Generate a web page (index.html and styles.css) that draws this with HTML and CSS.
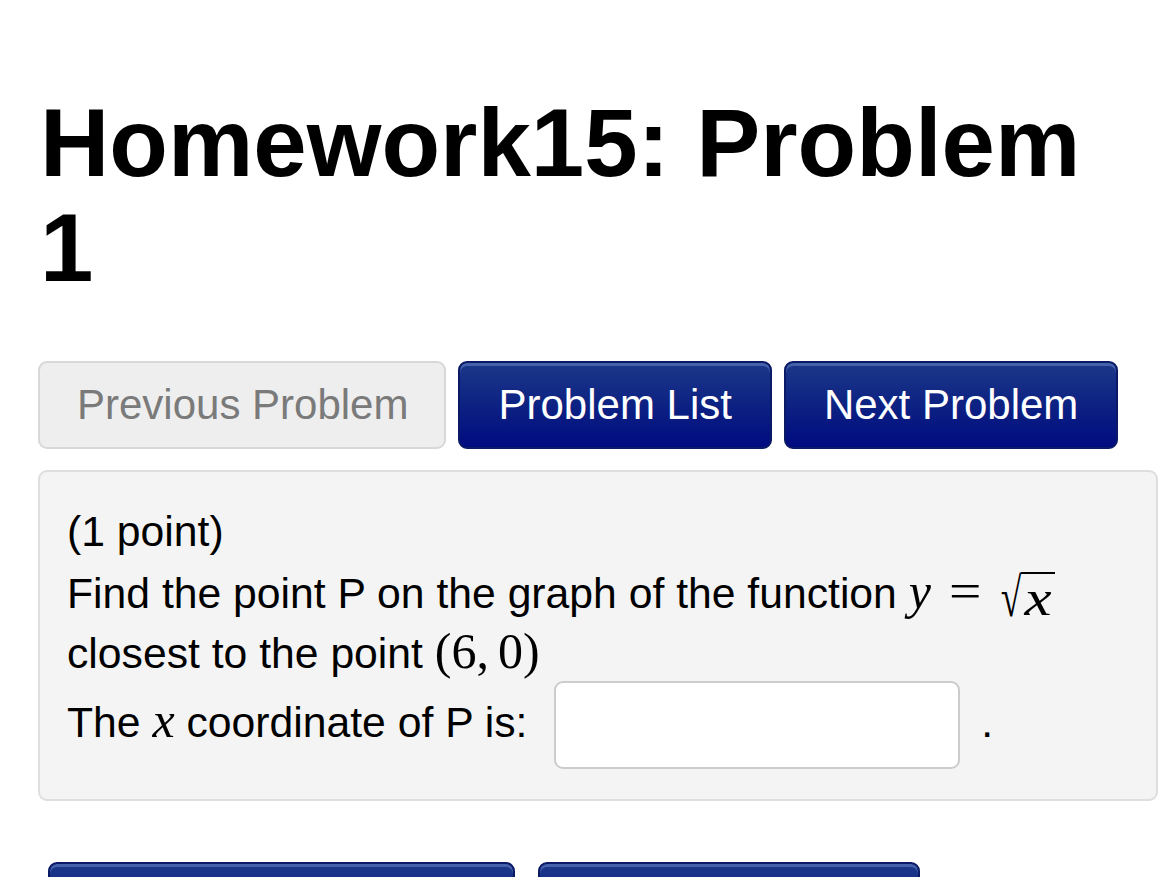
FILE: index.html
```html
<!DOCTYPE html>
<html lang="en">
<head>
<meta charset="utf-8">
<title>Homework15: Problem 1</title>
<link rel="stylesheet" href="styles.css">
</head>
<body>
<div class="page">
  <h1 class="title">Homework15: Problem 1</h1>
  <div class="nav">
    <span class="btn btn-disabled">Previous Problem</span>
    <span class="btn btn-blue">Problem List</span>
    <span class="btn btn-blue">Next Problem</span>
  </div>
  <div class="problem">
    <div class="line">(1 point)</div>
    <div class="line">Find the point P on the graph of the function <span class="math"><i class="mi">y</i><span class="mo">=</span><span class="sqrt"><span class="rad">√</span><span class="radicand"><i class="mi mi-wide">x</i></span></span></span></div>
    <div class="line">closest to the point <span class="math mnum">(6,<span class="thin"></span>0)</span></div>
    <div class="line-answer">The <span class="math"><i class="mi">x</i></span> coordinate of P is: <span class="answer"></span> .</div>
  </div>
  <div class="submit">
    <span class="btn btn-blue">Preview My Answers</span>
    <span class="btn btn-blue">Submit Answers</span>
  </div>
</div>
</body>
</html>
```
FILE: styles.css
```css
html, body {
  margin: 0;
  padding: 0;
  background: #ffffff;
}
body {
  font-family: "Liberation Sans", Arial, sans-serif;
  color: #000;
}
.page {
  padding: 90px 9px 0 38px;
}
.title {
  margin: 0;
  font-size: 96px;
  line-height: 105px;
  font-weight: bold;
  padding-right: 60px;
  padding-left: 2px;
}
.nav {
  display: flex;
  gap: 12px;
  margin-top: 61px;
}
.btn {
  display: inline-block;
  font-size: 42px;
  line-height: 60px;
  padding: 12px 38px;
  border: 2px solid;
  border-radius: 9px;
  white-space: nowrap;
}
.btn-disabled {
  background: #eeeeee;
  border-color: #d8d8d8;
  color: #7a7a7a;
  padding: 12px 36px 12px 37px;
}
.btn-blue {
  background: linear-gradient(#1c3889 0%, #0e2483 45%, #000b80 100%);
  border-color: #0b1a66;
  color: #ffffff;
  box-shadow: inset 0 3px 0 rgba(120, 150, 210, 0.45);
}
.problem {
  margin-top: 21px;
  background: #f4f4f4;
  border: 2px solid #dedede;
  border-radius: 9px;
  padding: 29px 26px 30px 27px;
  font-size: 42.7px;
  line-height: 60px;
}
.line {
  white-space: nowrap;
  height: 60px;
}
.line-answer {
  white-space: nowrap;
}
.math {
  font-family: "Liberation Serif", "Times New Roman", serif;
  font-size: 50px;
}
.mi {
  font-style: italic;
}
.mi-wide {
  display: inline-block;
  transform: scaleX(1.22);
  margin: 0 4px 0 3px;
}
.mo {
  display: inline-block;
  transform: scaleX(1.15);
  margin: 0 15px 0 20px;
}
.sqrt {
  display: inline-flex;
  align-items: flex-start;
}
.rad {
  display: inline-block;
  transform: translateY(6px) scale(0.75, 1.1);
  transform-origin: 100% 50%;
  margin-right: -1px;
}
.radicand {
  display: inline-block;
  border-top: 2px solid #000;
  line-height: 48px;
  margin-top: 11px;
  padding: 0 2px 0 3px;
}
.mnum {
  margin-left: 0;
}
.thin {
  display: inline-block;
  width: 9px;
}
.answer {
  display: inline-block;
  box-sizing: border-box;
  width: 406px;
  height: 88px;
  margin: 0 9px 0 15px;
  background: #ffffff;
  border: 2px solid #cccccc;
  border-radius: 9px;
  vertical-align: -32px;
}
.submit {
  display: flex;
  gap: 23px;
  margin-top: 61px;
  padding-left: 10px;
}
```
